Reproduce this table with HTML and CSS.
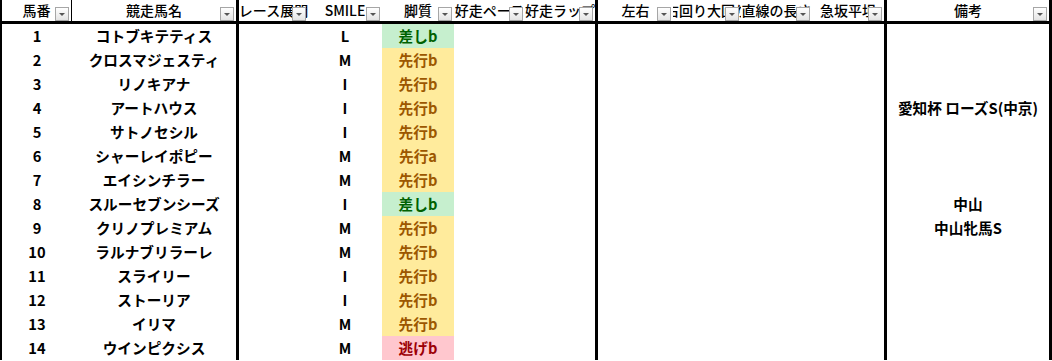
FILE: index.html
```html
<!DOCTYPE html>
<html lang="ja">
<head>
<meta charset="utf-8">
<title>出走馬一覧</title>
<link rel="stylesheet" href="styles.css">
</head>
<body>
<div class="sheet">
  <div class="h first"><span class="t">馬番</span><i class="dd"></i></div>
  <div class="h end"><span class="t">競走馬名</span><i class="dd"></i></div>
  <div class="h"><span class="t">レース展開</span><i class="dd"></i></div>
  <div class="h"><span class="t">SMILE</span><i class="dd"></i></div>
  <div class="h"><span class="t">脚質</span><i class="dd"></i></div>
  <div class="h"><span class="t">好走ペース</span><i class="dd"></i></div>
  <div class="h end"><span class="t">好走ラップ</span><i class="dd"></i></div>
  <div class="h"><span class="t">左右</span><i class="dd"></i></div>
  <div class="h"><span class="t">右回り大回り</span><i class="dd"></i></div>
  <div class="h"><span class="t">直線の長さ</span><i class="dd"></i></div>
  <div class="h end"><span class="t">急坂平坦</span><i class="dd"></i></div>
  <div class="h end"><span class="t">備考</span><i class="dd"></i></div>

  <div class="c">1</div><div class="c end">コトブキテティス</div><div class="c"></div><div class="c">L</div><div class="c g">差しb</div><div class="c"></div><div class="c end"></div><div class="c"></div><div class="c"></div><div class="c"></div><div class="c end"></div><div class="c end"></div>
  <div class="c">2</div><div class="c end">クロスマジェスティ</div><div class="c"></div><div class="c">M</div><div class="c y">先行b</div><div class="c"></div><div class="c end"></div><div class="c"></div><div class="c"></div><div class="c"></div><div class="c end"></div><div class="c end"></div>
  <div class="c">3</div><div class="c end">リノキアナ</div><div class="c"></div><div class="c">I</div><div class="c y">先行b</div><div class="c"></div><div class="c end"></div><div class="c"></div><div class="c"></div><div class="c"></div><div class="c end"></div><div class="c end"></div>
  <div class="c">4</div><div class="c end">アートハウス</div><div class="c"></div><div class="c">I</div><div class="c y">先行b</div><div class="c"></div><div class="c end"></div><div class="c"></div><div class="c"></div><div class="c"></div><div class="c end"></div><div class="c end">愛知杯 ローズS(中京)</div>
  <div class="c">5</div><div class="c end">サトノセシル</div><div class="c"></div><div class="c">I</div><div class="c y">先行b</div><div class="c"></div><div class="c end"></div><div class="c"></div><div class="c"></div><div class="c"></div><div class="c end"></div><div class="c end"></div>
  <div class="c">6</div><div class="c end">シャーレイポピー</div><div class="c"></div><div class="c">M</div><div class="c y">先行a</div><div class="c"></div><div class="c end"></div><div class="c"></div><div class="c"></div><div class="c"></div><div class="c end"></div><div class="c end"></div>
  <div class="c">7</div><div class="c end">エイシンチラー</div><div class="c"></div><div class="c">M</div><div class="c y">先行b</div><div class="c"></div><div class="c end"></div><div class="c"></div><div class="c"></div><div class="c"></div><div class="c end"></div><div class="c end"></div>
  <div class="c">8</div><div class="c end">スルーセブンシーズ</div><div class="c"></div><div class="c">I</div><div class="c g">差しb</div><div class="c"></div><div class="c end"></div><div class="c"></div><div class="c"></div><div class="c"></div><div class="c end"></div><div class="c end">中山</div>
  <div class="c">9</div><div class="c end">クリノプレミアム</div><div class="c"></div><div class="c">M</div><div class="c y">先行b</div><div class="c"></div><div class="c end"></div><div class="c"></div><div class="c"></div><div class="c"></div><div class="c end"></div><div class="c end">中山牝馬S</div>
  <div class="c">10</div><div class="c end">ラルナブリラーレ</div><div class="c"></div><div class="c">M</div><div class="c y">先行b</div><div class="c"></div><div class="c end"></div><div class="c"></div><div class="c"></div><div class="c"></div><div class="c end"></div><div class="c end"></div>
  <div class="c">11</div><div class="c end">スライリー</div><div class="c"></div><div class="c">I</div><div class="c y">先行b</div><div class="c"></div><div class="c end"></div><div class="c"></div><div class="c"></div><div class="c"></div><div class="c end"></div><div class="c end"></div>
  <div class="c">12</div><div class="c end">ストーリア</div><div class="c"></div><div class="c">I</div><div class="c y">先行b</div><div class="c"></div><div class="c end"></div><div class="c"></div><div class="c"></div><div class="c"></div><div class="c end"></div><div class="c end"></div>
  <div class="c">13</div><div class="c end">イリマ</div><div class="c"></div><div class="c">M</div><div class="c y">先行b</div><div class="c"></div><div class="c end"></div><div class="c"></div><div class="c"></div><div class="c"></div><div class="c end"></div><div class="c end"></div>
  <div class="c">14</div><div class="c end">ウインピクシス</div><div class="c"></div><div class="c">M</div><div class="c p">逃げb</div><div class="c"></div><div class="c end"></div><div class="c"></div><div class="c"></div><div class="c"></div><div class="c end"></div><div class="c end"></div>
</div>
</body>
</html>
```

FILE: styles.css
```css
* { box-sizing: border-box; }
html, body { margin: 0; padding: 0; background: #fff; }
body {
  font-family: "Noto Sans CJK JP", "Noto Sans", sans-serif;
  color: #000;
  width: 1052px;
  height: 361px;
  overflow: hidden;
}
.sheet {
  display: grid;
  grid-template-columns: 70px 167px 69px 74px 72px 71px 73px 75px 68px 71px 75px 165px;
  grid-auto-rows: 24px;
  border-left: 2px solid #000;
}
.h {
  position: relative;
  height: 24px;
  border-bottom: 3px solid #000;
  display: flex;
  justify-content: center;
  align-items: center;
  overflow: hidden;
  font-size: 14px;
  font-weight: 500;
  line-height: 21px;
  white-space: nowrap;
}
.h .t { flex: none; }
.h.first { border-right: 1px solid #000; }
.end { border-right: 3px solid #000; }
.dd {
  position: absolute;
  right: 2px;
  bottom: 0;
  width: 14px;
  height: 14px;
  border: 1px solid #a6a6a6;
  background: linear-gradient(#ffffff, #e4e4e4);
}
.dd::after {
  content: "";
  position: absolute;
  left: 3px;
  top: 5px;
  border-left: 3px solid transparent;
  border-right: 3px solid transparent;
  border-top: 3px solid #555;
}
.c {
  display: flex;
  justify-content: center;
  align-items: center;
  font-size: 14.67px;
  font-weight: 700;
  line-height: 24px;
  white-space: nowrap;
  overflow: hidden;
}
.g { background: #c6efce; color: #006100; }
.y { background: #ffeb9c; color: #9c5700; }
.p { background: #ffc7ce; color: #9c0006; }
```
